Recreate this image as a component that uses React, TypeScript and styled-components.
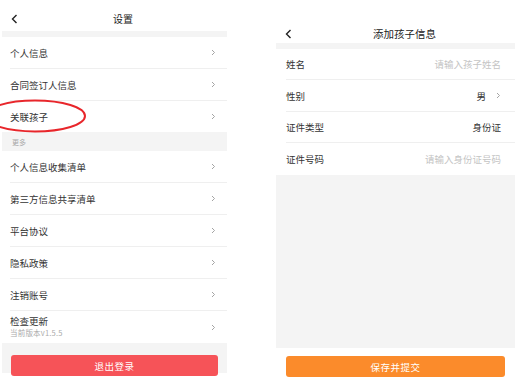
import React from "react";
import styled, { createGlobalStyle } from "styled-components";

const GlobalStyle = createGlobalStyle`
  html, body {
    margin: 0;
    padding: 0;
    background: #ffffff;
    font-family: "Noto Sans CJK SC", "Noto Sans", sans-serif;
  }
`;

const Page = styled.div`
  width: 516px;
  height: 386px;
  display: flex;
  align-items: flex-start;
  overflow: hidden;
  position: relative;
`;

const Screen = styled.div<{ $width: number; $left: number; $top: number }>`
  width: ${(p) => p.$width}px;
  margin-left: ${(p) => p.$left}px;
  margin-top: ${(p) => p.$top}px;
  display: flex;
  flex-direction: column;
  position: relative;
`;

const Header = styled.div<{ $height: number; $shift: number; $size: number; $drop: number }>`
  height: ${(p) => p.$height}px;
  box-sizing: border-box;
  padding-top: ${(p) => p.$drop}px;
  display: flex;
  align-items: center;
  padding-left: 9px;
  color: #222;
  font-size: ${(p) => p.$size}px;

  span {
    flex: 1;
    text-align: center;
    padding-left: ${(p) => p.$shift}px;
  }
`;

const Band = styled.div<{ $height: number }>`
  height: ${(p) => p.$height}px;
  background: #f4f4f4;
`;

const SectionLabel = styled.div`
  height: 19px;
  background: #f4f4f4;
  color: #a8a8a8;
  font-size: 7px;
  display: flex;
  align-items: center;
  padding-left: 10px;
`;

const Row = styled.div<{ $height: number; $divider?: boolean; $inset: number; $right: number }>`
  height: ${(p) => p.$height}px;
  box-sizing: border-box;
  margin-left: ${(p) => p.$inset}px;
  padding-right: ${(p) => p.$right}px;
  display: flex;
  align-items: center;
  border-bottom: ${(p) => (p.$divider ? "1px solid #efefef" : "none")};
  font-size: 9.5px;
  color: #333;
`;

const Label = styled.div`
  flex: 1;
  display: flex;
  flex-direction: column;
  line-height: 12px;
`;

const SubText = styled.div`
  font-size: 7.5px;
  color: #aaa;
  letter-spacing: 0.2px;
`;

const Value = styled.span<{ $muted?: boolean; $gap?: number }>`
  color: ${(p) => (p.$muted ? "#c4c4c4" : "#333")};
  font-size: 9.5px;
  margin-right: ${(p) => p.$gap ?? 0}px;
`;

const Footer = styled.div<{ $height: number; $pad: number }>`
  height: ${(p) => p.$height}px;
  background: #f4f4f4;
  padding: 0 ${(p) => p.$pad}px;
  box-sizing: border-box;
`;

const Button = styled.div<{ $color: string }>`
  height: 21px;
  border-radius: 3px;
  background: ${(p) => p.$color};
  color: #fff;
  font-size: 9.5px;
  display: flex;
  align-items: center;
  justify-content: center;
  letter-spacing: 0.5px;
`;

const ButtonBar = styled.div<{ $top: number; $pad: number }>`
  padding: ${(p) => p.$top}px ${(p) => p.$pad}px 0;
`;

const Mark = styled.svg`
  position: absolute;
  left: 0;
  top: 99px;
  pointer-events: none;
`;

const Back = () => (
  <svg width="7" height="10" viewBox="0 0 7 10">
    <polyline points="5.5,1 1.5,5 5.5,9" fill="none" stroke="#222" strokeWidth="1.4" />
  </svg>
);

const Chevron = () => (
  <svg width="5" height="7" viewBox="0 0 5 7">
    <polyline points="1,1 3.5,3.5 1,6" fill="none" stroke="#9a9a9a" strokeWidth="0.9" />
  </svg>
);

const topItems = ["个人信息", "合同签订人信息", "关联孩子"];
const moreItems = ["个人信息收集清单", "第三方信息共享清单", "平台协议", "隐私政策", "注销账号"];

const SettingsScreen = () => (
  <Screen $width={225} $left={2} $top={0}>
    <Header $height={31} $drop={6} $shift={1} $size={10}>
      <Back />
      <span>设置</span>
    </Header>
    <Band $height={6} />
    {topItems.map((t, i) => (
      <Row key={t} $height={i === 2 ? 31 : 32} $inset={8} $right={11} $divider={i < 2}>
        <Label>{t}</Label>
        <Chevron />
      </Row>
    ))}
    <SectionLabel>更多</SectionLabel>
    {moreItems.map((t) => (
      <Row key={t} $height={32} $inset={8} $right={11} $divider>
        <Label>{t}</Label>
        <Chevron />
      </Row>
    ))}
    <Row $height={32} $inset={8} $right={11}>
      <Label>
        检查更新
        <SubText>当前版本v1.5.5</SubText>
      </Label>
      <Chevron />
    </Row>
    <Footer $height={30} $pad={8}>
      <ButtonBar $top={12} $pad={1}>
        <Button $color="#f65358">退出登录</Button>
      </ButtonBar>
    </Footer>
  </Screen>
);

const ChildScreen = () => (
  <Screen $width={239} $left={49} $top={20}>
    <Header $height={23} $drop={4} $shift={2} $size={10.5}>
      <Back />
      <span>添加孩子信息</span>
    </Header>
    <Band $height={6} />
    <Row $height={31} $inset={10} $right={14} $divider>
      <Label>姓名</Label>
      <Value $muted>请输入孩子姓名</Value>
    </Row>
    <Row $height={32} $inset={10} $right={14} $divider>
      <Label>性别</Label>
      <Value $gap={10}>男</Value>
      <Chevron />
    </Row>
    <Row $height={31} $inset={10} $right={14} $divider>
      <Label>证件类型</Label>
      <Value>身份证</Value>
    </Row>
    <Row $height={32} $inset={10} $right={14}>
      <Label>证件号码</Label>
      <Value $muted>请输入身份证号码</Value>
    </Row>
    <Footer $height={173} $pad={0} />
    <ButtonBar $top={8} $pad={10}>
      <Button $color="#fb8b2b">保存并提交</Button>
    </ButtonBar>
  </Screen>
);

export default function App() {
  return (
    <>
      <GlobalStyle />
      <Page>
        <SettingsScreen />
        <ChildScreen />
        <Mark width="100" height="40" viewBox="0 0 100 40">
          <ellipse cx="35" cy="17" rx="50" ry="15.5" fill="none" stroke="#e8262b" strokeWidth="2" />
        </Mark>
      </Page>
    </>
  );
}
